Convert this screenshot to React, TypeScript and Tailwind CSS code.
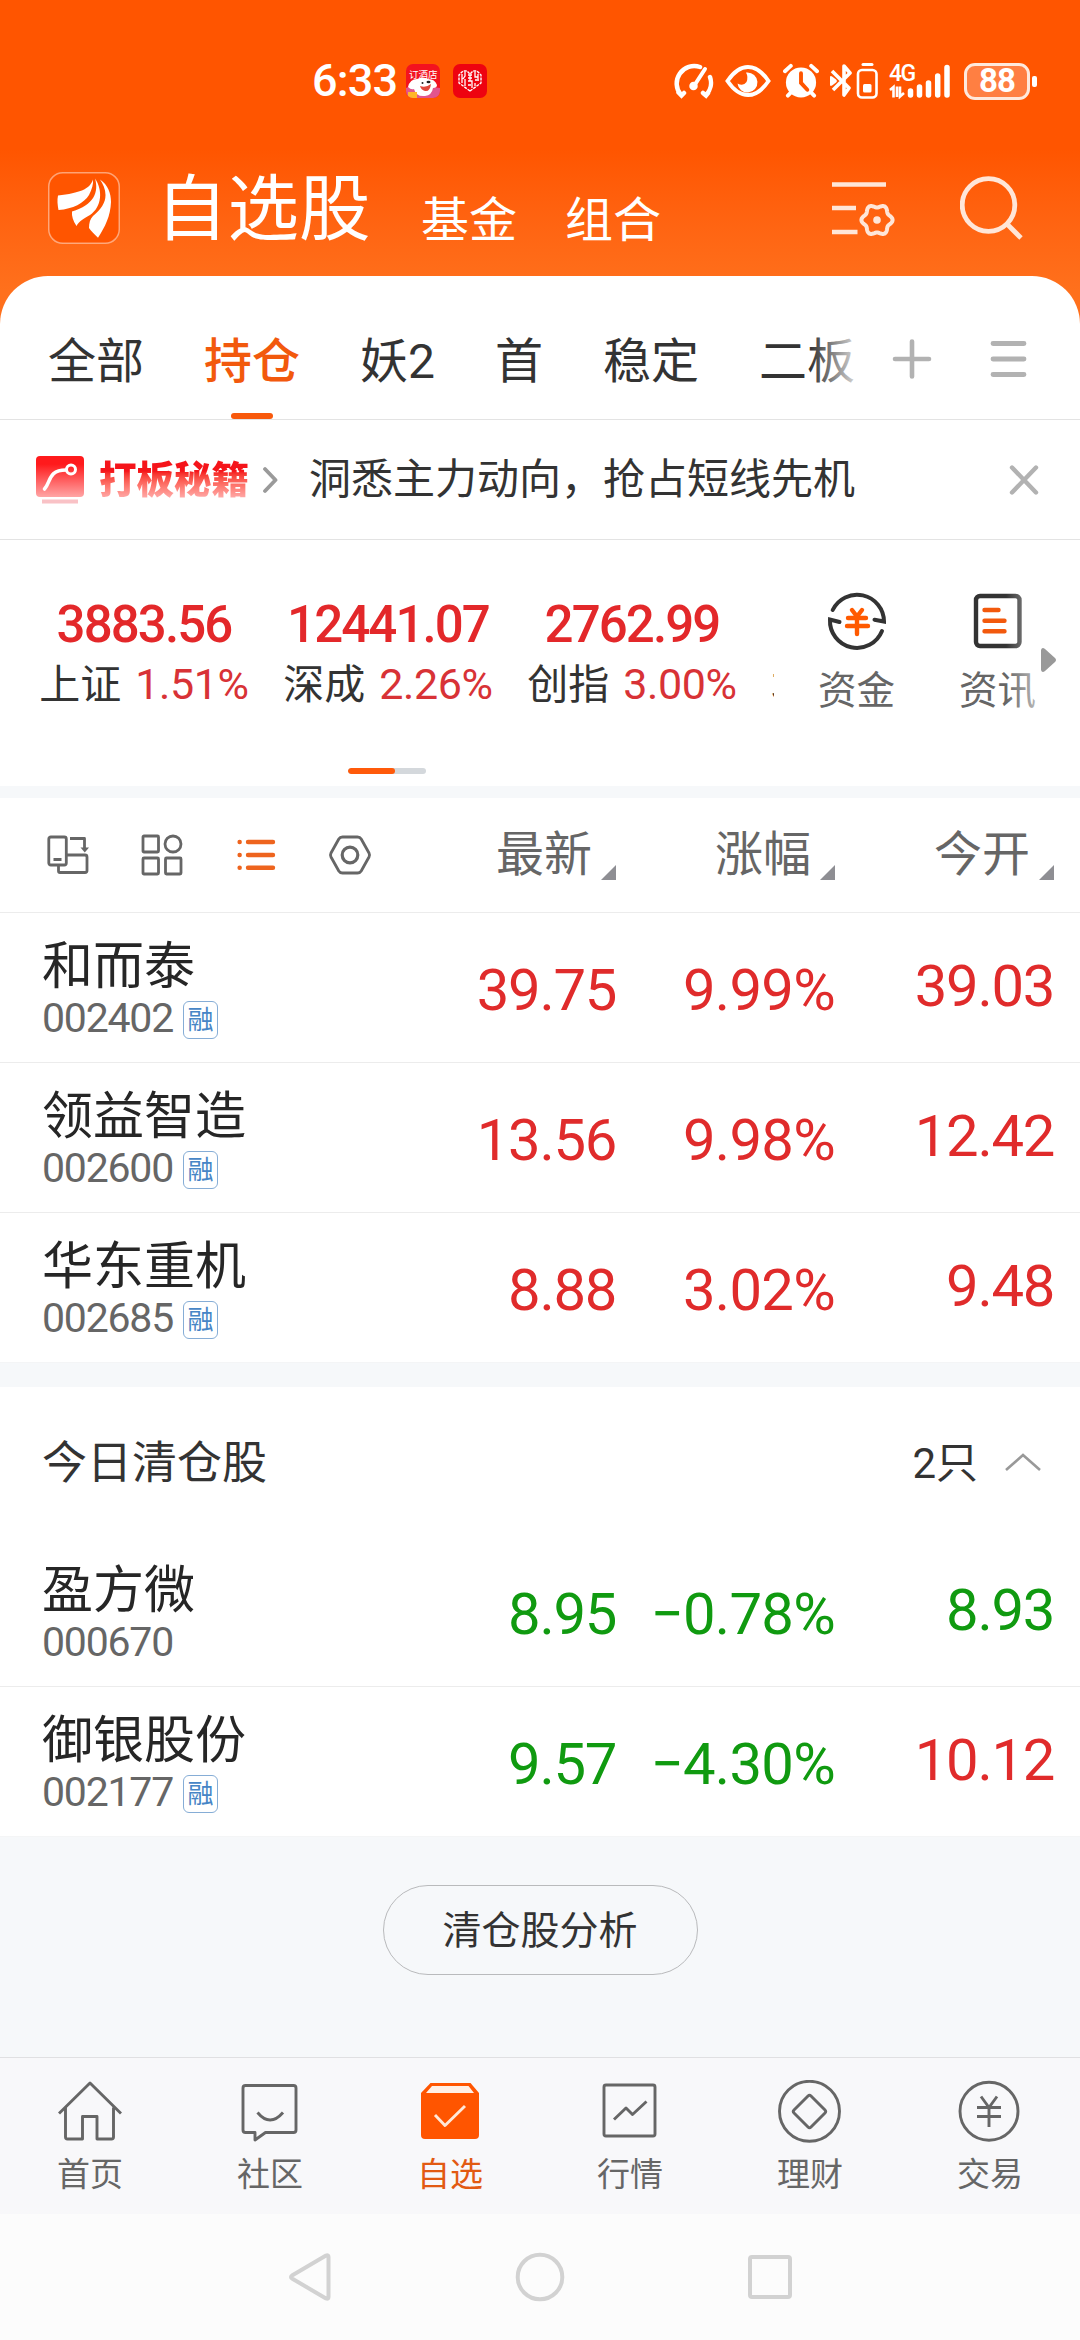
import { useState } from 'react'
import type { ReactNode } from 'react'
import clsx from 'clsx'

interface Stock {
  name: string
  code: string
  margin: boolean
  last: string
  change: string
  open: string
  down?: boolean
  openDown?: boolean
}

const holdings: Stock[] = [
  { name: '和而泰', code: '002402', margin: true, last: '39.75', change: '9.99%', open: '39.03' },
  { name: '领益智造', code: '002600', margin: true, last: '13.56', change: '9.98%', open: '12.42' },
  { name: '华东重机', code: '002685', margin: true, last: '8.88', change: '3.02%', open: '9.48' },
]

const cleared: Stock[] = [
  { name: '盈方微', code: '000670', margin: false, last: '8.95', change: '-0.78%', open: '8.93', down: true, openDown: true },
  { name: '御银股份', code: '002177', margin: true, last: '9.57', change: '-4.30%', open: '10.12', down: true },
]

const groups = ['全部', '持仓', '妖2', '首', '稳定', '二板']

const indices = [
  { name: '上证', value: '3883.56', change: '1.51%' },
  { name: '深成', value: '12441.07', change: '2.26%' },
  { name: '创指', value: '2762.99', change: '3.00%' },
]

// six-lobed gear outline around (cx, cy)
function gearPath(cx: number, cy: number, r: number, wave: number) {
  const points: string[] = []
  for (let i = 0; i < 72; i++) {
    const a = (i / 72) * Math.PI * 2
    const d = r + wave * Math.cos(6 * a)
    points.push(`${(cx + d * Math.cos(a)).toFixed(2)} ${(cy + d * Math.sin(a)).toFixed(2)}`)
  }
  return `M${points.join('L')}Z`
}

function StatusBar() {
  return (
    <div className="flex h-[124px] items-center pt-[38px] pr-[43px] pl-[312px] text-white">
      <span className="w-[94px] text-[45px] leading-[62px] font-medium tracking-[-0.8px]">6:33</span>
      {/* Notification icons */}
      <div className="relative h-[34px] w-[34px] overflow-hidden rounded-[7px] bg-[#f3131f]">
        <svg width="34" height="34" viewBox="0 0 34 34">
          <path d="M0 24q6-3 17-2t17 2v10H0z" fill="#e2558c" />
          <path d="M2 23q2-8 9-8 6-3 11 0 7 0 9 6 0 3-4 3-1 7-8 8-9 1-11-7-3 1-6-2z" fill="#fff" />
          <path d="M14 22q6 2 11-2-1 8-6 7-4-1-5-5z" fill="#e0483c" />
          <circle cx="16.500" cy="19" r="1" fill="#222" />
          <ellipse cx="22.500" cy="18" rx="2" ry="1.300" fill="#222" />
          <path d="M2 28h9v6H2z" fill="#ffb628" />
        </svg>
        <span className="absolute top-[5px] left-[3px] text-[9.500px] leading-[12px] whitespace-nowrap">订酒店</span>
      </div>
      <svg className="ml-[13px]" width="34" height="34" viewBox="0 0 34 34">
        <rect width="34" height="34" rx="7" fill="#ee0310" />
        <path d="M17 27L6 19V11l4-4h4l3 3 3-3h4l4 4v8z" fill="none" stroke="#fff" strokeWidth="1.400" strokeDasharray="3 1" />
        <path d="M9 10v9M12 8v4l-2 3M12 15v7M15 11h4M17 11v6M15 17h4v7M15 21h3M22 8v5h3M22 16h4M22 19v3M25 10v5M15 14h4" stroke="#fff" strokeWidth="1.300" fill="none" />
      </svg>
      <div className="flex-1" />
      {/* System icons */}
      <svg width="40" height="36" viewBox="0 0 40 36" fill="none" stroke="#fff" strokeWidth="4.500" strokeLinecap="round">
        <path d="M7 32A17.500 17.500 0 0 1 26 4M36 14A17.500 17.500 0 0 1 32 32M4.500 29.500L7.500 32.500L10 30M29 30L32 32.500L34 30" />
        <path d="M20 23L31 6" strokeWidth="4" />
        <circle cx="19.500" cy="23" r="2" />
      </svg>
      <svg className="ml-[11px]" width="46" height="34" viewBox="0 0 46 34">
        <path d="M2.500 17Q12 3 23 3t20.500 14Q34 31 23 31T2.500 17z" fill="none" stroke="#fff" strokeWidth="4" />
        <path d="M22 8.500a10 10 0 1 1-9.500 11q6 3 9-1.500 2-5-.5-9.500z" fill="#fff" />
      </svg>
      <svg className="ml-[12px]" width="36" height="36" viewBox="0 0 37 36">
        <circle cx="18.500" cy="19.500" r="15.500" fill="#fff" />
        <path d="M2 8L8 2.500M35 8L29 2.500M5 33l5-5M32 33l-5-5" stroke="#fff" strokeWidth="4" strokeLinecap="round" />
        <path d="M18.500 10v10l6.500 7" stroke="#ff5500" strokeWidth="4" fill="none" strokeLinecap="round" />
      </svg>
      <svg className="ml-[11px]" width="48" height="38" viewBox="0 0 48 38" fill="none" stroke="#fff">
        <path d="M2 9L19 26 14 33V4L20 11 3 28M1 16v6l4-3z" strokeWidth="3.600" strokeLinejoin="round" />
        <rect x="28" y="8" width="18.500" height="27.500" rx="4" strokeWidth="2.600" />
        <path d="M33 2.500h9" strokeWidth="3" strokeLinecap="round" />
        <rect x="33" y="22" width="8.500" height="8.500" rx="1.500" fill="#fff" stroke="none" />
      </svg>
      <div className="relative ml-[11px] h-[36px] w-[62px]">
        <span className="absolute top-[1px] left-0 text-[23px] leading-[20px] font-medium tracking-[-1.500px]">4G</span>
        <svg width="62" height="36" viewBox="0 0 62 36" stroke="#fff" fill="none">
          <path d="M1 27l3.500-3v10.500M8 23.500V34M11 23.500v10l4-3.500" strokeWidth="2.600" />
          <path d="M21.500 28v4M30.500 24v8M39.500 20v12M48.700 13v19M58 4.500v27.500" strokeWidth="5.500" strokeLinecap="round" />
        </svg>
      </div>
      <div className="ml-[13px] flex items-center">
        <div className="flex h-[37px] w-[66px] items-center justify-center rounded-[11px] border-[3px] border-[#ffe9dc] bg-[#ff7f42] text-[33px] leading-[30px] font-bold tracking-[-1px]">
          88
        </div>
        <div className="ml-[2px] h-[11px] w-[5px] rounded-[2px] bg-white" />
      </div>
    </div>
  )
}

function Header() {
  return (
    <header className="flex h-[152px] items-start pr-[54px] pl-[48px] text-white">
      <svg className="mt-[48px]" width="72" height="72" viewBox="0 0 72 72">
        <rect x=".75" y=".75" width="70.500" height="70.500" rx="14" fill="#ff5500" stroke="#fff" strokeOpacity=".45" strokeWidth="1.500" />
        <g fill="#fff">
          <path d="M45 7.500C42 17 32 21 10 23.500C9 28 9.500 33 10.500 38C25 37 36 31 41 23C44 17 45.500 12 45 7.500Z" />
          <path d="M47 6.500C51 20 46 33 24 39.500C23.500 44 25 49 28.500 54C31 49 36 46.500 42 43C54 35 55 18 47 6.500Z" />
          <path d="M52 7.500C60 13 63 21 63 30C62.500 44 57 55 50 65.700C46 62 43 59 41 56C41 51 42 47 45 44C53 37 57.500 31 57.500 23C57.500 17 55 12 52 7.500Z" />
        </g>
      </svg>
      <div className="mt-[38px] ml-[36px] flex items-start whitespace-nowrap">
        <h1 className="w-[214px] text-[71.500px] leading-[96px]">自选股</h1>
        <span className="mt-[29px] ml-[51px] text-[48px] leading-[60px]">基金</span>
        <span className="mt-[29px] ml-[48px] text-[48px] leading-[60px]">组合</span>
      </div>
      <div className="flex-1" />
      <svg className="mt-[54px]" width="64" height="62" viewBox="0 0 64 62" fill="none" stroke="#ffe6d8" strokeWidth="4.600">
        <path d="M0 6.500h54M0 30h24M0 54h25.500" />
        <path d={gearPath(45, 42, 14, 1.6)} strokeWidth="4" strokeLinejoin="round" />
        <circle cx="45" cy="42" r="3.800" fill="#ffe6d8" stroke="none" />
      </svg>
      <svg className="mt-[50px] ml-[64px]" width="66" height="66" viewBox="0 0 66 66" fill="none" stroke="#ffe6d8" strokeWidth="4.800">
        <circle cx="28.500" cy="31" r="26.300" />
        <path d="M46.500 49.500L61 64" />
      </svg>
    </header>
  )
}

function GroupTabs() {
  const [active, setActive] = useState('持仓')

  return (
    <nav className="flex h-[144px] items-stretch border-b border-[#e3e3e3]">
      <div className="relative flex w-[856px] gap-[60px] overflow-hidden pl-[48px]">
        {groups.map((group) => (
          <button
            key={group}
            onClick={() => setActive(group)}
            className={clsx(
              'relative shrink-0 pt-[28px] text-[48px] leading-none whitespace-nowrap',
              group === active ? 'font-medium text-[#f2590d]' : 'text-[#333]'
            )}
          >
            {group}
            {group === active && (
              <span className="absolute bottom-0 left-1/2 h-[6px] w-[42px] -translate-x-1/2 rounded-full bg-[#f8590c]" />
            )}
          </button>
        ))}
        <div className="absolute top-0 right-0 h-full w-[46px] bg-linear-to-r from-transparent to-white/80" />
      </div>
      <svg className="mt-[63px] ml-[36px]" width="40" height="40" viewBox="0 0 40 40" stroke="#b2b2b2" strokeWidth="4.600" strokeLinecap="round">
        <path d="M20 2.500v35M3 20h34" />
      </svg>
      <svg className="mt-[63px] ml-[56px]" width="40" height="40" viewBox="0 0 40 40" stroke="#b2b2b2" strokeWidth="4.800" strokeLinecap="round">
        <path d="M5 4.500h31M5 20h31M5 35.500h31" />
      </svg>
    </nav>
  )
}

function PromoBar() {
  return (
    <div className="flex h-[120px] items-center border-b border-[#e3e3e3] pr-[41px] pl-[36px]">
      <svg width="48" height="50" viewBox="0 0 48 50">
        <defs>
          <linearGradient id="promo" x1="0" y1="0" x2="0" y2="1">
            <stop offset=".2" stopColor="#ff1a1c" />
            <stop offset="1" stopColor="#ffa5a5" />
          </linearGradient>
        </defs>
        <rect width="48" height="41" rx="4" y="1" fill="url(#promo)" />
        <path d="M6 46.500h36" stroke="#f9c2c6" strokeWidth="4" />
        <path d="M8.500 34C15 27 12 15 30 15" fill="none" stroke="#fff" strokeWidth="3.600" strokeLinecap="round" />
        <circle cx="35" cy="14.500" r="4.500" fill="none" stroke="#fff" strokeWidth="3" />
      </svg>
      <span className="ml-[15px] w-[150px] bg-linear-to-b from-[#f5141a] from-30% to-[#ffb0b0] to-95% bg-clip-text text-[37.500px] leading-[44px] font-black text-transparent">
        打板秘籍
      </span>
      <svg className="ml-[13px]" width="16" height="28" viewBox="0 0 16 28" fill="none" stroke="#9a9a9a" strokeWidth="3.800" strokeLinecap="round" strokeLinejoin="round">
        <path d="M3 3l10.500 11L3 25" />
      </svg>
      <span className="ml-[31px] flex-1 text-[42px] leading-[60px] text-[#333]">洞悉主力动向，抢占短线先机</span>
      <svg className="mt-[1px]" width="30" height="30" viewBox="0 0 30 30" stroke="#b2b2b2" strokeWidth="4.400" strokeLinecap="round">
        <path d="M3 2.500l24 25M27 2.500l-24 25" />
      </svg>
    </div>
  )
}

function Indices() {
  return (
    <section className="relative flex h-[246px]">
      <div className="flex w-[774px] overflow-hidden pl-[22px]">
        {indices.map((item) => (
          <div key={item.name} className="flex w-[244px] shrink-0 flex-col items-center whitespace-nowrap">
            <div className="mt-[55px] text-[51px] leading-[60px] font-medium tracking-[-1.900px] text-[#e3282a]">{item.value}</div>
            <div className="text-[41px] leading-[58px] text-[#333]">
              {item.name}
              <span className="ml-[14px] text-[43px] tracking-[-0.400px] text-[#d83236]">{item.change}</span>
            </div>
          </div>
        ))}
        {/* next index, scrolled out of view */}
        <div className="shrink-0 pt-[115px] pl-[17px] text-[41px] leading-[58px] text-[#333]">北</div>
      </div>
      <div className="relative flex flex-1">
        <div className="ml-[12px] flex w-[141px] flex-col items-center pt-[50px]">
          <svg width="62" height="62" viewBox="0 0 62 62" fill="none" stroke="#333" strokeWidth="4" strokeLinecap="round">
            <path d="M6.700 20A27 27 0 0 1 58 31.500L48.500 29.700M56 41A27 27 0 0 1 4 29.500L13.500 32" />
            <path d="M26 20l5 6.500 5-6.500M22 28h18M21 36h21M31 28v16" stroke="#ff5a00" strokeWidth="4.400" />
          </svg>
          <span className="mt-[15px] text-[38.500px] leading-[48px] text-[#666]">资金</span>
        </div>
        <div className="flex w-[141px] flex-col items-center pt-[50px]">
          <svg width="62" height="62" viewBox="0 0 62 62" fill="none" strokeLinecap="round">
            <rect x="9" y="6" width="43.500" height="50" rx="4" stroke="#333" strokeWidth="4.400" />
            <path d="M17.500 20h14M17.500 30.700h20M17.500 41.300h20" stroke="#f2590d" strokeWidth="4.400" />
          </svg>
          <span className="mt-[15px] text-[38.500px] leading-[48px] text-[#666]">资讯</span>
        </div>
        <div className="absolute top-[50px] right-[40px] h-[130px] w-[34px] bg-linear-to-r from-transparent to-white/60" />
        <svg className="absolute top-[107px] right-[23px]" width="17" height="26" viewBox="0 0 17 26" fill="#999">
          <path d="M1 3Q2-.5 5 2L15 11q2 2 0 4L5 24q-3 2.500-4-1z" />
        </svg>
      </div>
      {/* Pager */}
      <div className="absolute top-[228px] left-[348px] h-[6px] w-[78px] overflow-hidden rounded-full bg-[#d4d8dc]">
        <div className="h-full w-[47px] rounded-full bg-[#ff5a0a]" />
      </div>
    </section>
  )
}

function TableHead() {
  return (
    <div className="flex h-[115px] items-center border-b border-[#ececec] pl-[46px]">
      <div className="flex w-[351px] items-center gap-[50px] text-[#666]">
        <svg width="44" height="44" viewBox="0 0 44 44" fill="none" stroke="currentColor" strokeWidth="2.800" strokeLinejoin="round">
          <rect x="2.800" y="4" width="17.500" height="28" rx="2" />
          <path d="M7.500 26.500h8M12.500 33v5q0 1.500 1.500 1.500h25q2 0 2-2V24q0-2-2-2H21M24 5.500h14.500V15" />
          <path d="M34.500 14.500h8.500l-4.200 5z" fill="currentColor" stroke="none" />
        </svg>
        <svg width="44" height="44" viewBox="0 0 44 44" fill="none" stroke="currentColor" strokeWidth="2.800">
          <rect x="3" y="3" width="15.500" height="16" rx="1" />
          <circle cx="33" cy="11" r="8" />
          <rect x="3" y="25" width="15.500" height="16" rx="1" />
          <rect x="25.500" y="25" width="15.500" height="16" rx="1" />
        </svg>
        <svg width="44" height="44" viewBox="0 0 44 44" fill="none" stroke="#ee641e" strokeWidth="4.400" strokeLinecap="round">
          <path d="M5.600 9h.1M14 9h25M5.600 22h.1M14 22h25M5.600 34.700h.1M14 34.700h25" />
        </svg>
        <svg width="44" height="44" viewBox="0 0 44 44" fill="none" stroke="currentColor" strokeWidth="2.800">
          <path d="M14.500 4h15q2.500 0 3.700 2L41 20q1 2 0 4l-7.800 14q-1.200 2-3.700 2h-15q-2.500 0-3.700-2L3 24q-1-2 0-4l7.800-14q1.200-2 3.700-2z" />
          <circle cx="22" cy="22" r="7.800" strokeWidth="3.200" />
        </svg>
      </div>
      {['最新', '涨幅', '今开'].map((label) => (
        <div key={label} className="flex w-[219px] items-end justify-end">
          <span className="text-[48px] leading-[60px] text-[#666]">{label}</span>
          <svg className="mb-[5px] ml-[9px]" width="15" height="15" viewBox="0 0 15 15" fill="#8e8e93">
            <path d="M15 0v15H0z" />
          </svg>
        </div>
      ))}
    </div>
  )
}

function StockRow({ stock, last }: { stock: Stock; last?: boolean }) {
  return (
    <div className={clsx('flex h-[150px] items-center border-b pl-[42px]', last ? 'border-[#f4f5f6]' : 'border-[#ececec]')}>
      <div className="w-[355px]">
        <div className="pt-[1px] text-[51px] leading-[59px] text-[#262626]">{stock.name}</div>
        <div className="flex items-center">
          <span className="text-[41px] leading-[44px] tracking-[-1.200px] text-[#666]">{stock.code}</span>
          {stock.margin && (
            <span className="mt-[2px] ml-[10px] -mb-[2px] flex h-[38px] w-[35px] items-center justify-center rounded-[6px] border-[1.500px] border-[#86add6] text-[26px] leading-none text-[#4685c6]">
              融
            </span>
          )}
        </div>
      </div>
      <div className={clsx('flex text-right text-[58px] leading-[70px] tracking-[-1.300px]', stock.down ? 'text-[#109a10]' : 'text-[#e02b2b]')}>
        <span className="w-[219px] pt-[4px]">{stock.last}</span>
        <span className="w-[219px] pt-[4px] tracking-[-0.700px]">{stock.change.replace('-', '−')}</span>
        <span className={clsx('w-[219px]', stock.openDown ? 'text-[#109a10]' : 'text-[#e02b2b]')}>{stock.open}</span>
      </div>
    </div>
  )
}

function NavItem({ label, active, children }: { label: string; active?: boolean; children: ReactNode }) {
  return (
    <button className={clsx('flex w-[180px] flex-col items-center pt-[22px]', active ? 'text-[#e25a12]' : 'text-[#666]')}>
      <svg width="64" height="64" viewBox="0 0 64 64" fill="none" stroke="currentColor" strokeWidth="2.900" strokeLinejoin="round">
        {children}
      </svg>
      <span className="mt-[9px] text-[33px] leading-[44px]">{label}</span>
    </button>
  )
}

function BottomNav() {
  return (
    <nav className="flex h-[157px] border-t border-[#e0e0e2] bg-[#f8f8fa]">
      <NavItem label="首页">
        <path d="M1 33.500L32 3l31 30.500M7.500 27.500V57q0 2 2 2h15V36.500H39V59h14.500q2 0 2-2V27.500" />
      </NavItem>
      <NavItem label="社区">
        <path d="M7.500 5.500h48q2.500 0 2.500 2.500v42q0 2.500-2.500 2.500H27.500L17 60v-7.500H7.500Q5 52.500 5 50V8q0-2.500 2.500-2.500z" />
        <path d="M19.500 32.500q12.500 15 25.500 0" />
      </NavItem>
      <NavItem label="自选" active>
        <path d="M3 13L12.500 3h40L61 13v42q0 4-4 4H7q-4 0-4-4z" fill="#ff5500" stroke="none" />
        <path d="M8 13l6-7h36.500l5.500 7z" fill="#fff0e6" stroke="none" />
        <path d="M17 35l10 10.500L47 26" stroke="#ffe8d8" />
      </NavItem>
      <NavItem label="行情">
        <rect x="6" y="5" width="51" height="51" rx="2" />
        <path d="M16 39.500l12-11.500 6.500 6.500L48.500 21.500" />
      </NavItem>
      <NavItem label="理财">
        <circle cx="31.500" cy="31.300" r="30" />
        <path d="M30 16q1.500-1.500 3 0l14 14q1.500 1.500 0 3l-14 14q-1.500 1.500-3 0l-14-14q-1.500-1.500 0-3z" />
      </NavItem>
      <NavItem label="交易">
        <circle cx="31" cy="31.300" r="29" />
        <path d="M23 16.500l8 11 8-11M19 27.500h24M19 36.500h24M31 27.500V47" />
      </NavItem>
    </nav>
  )
}

function SystemNav() {
  return (
    <div className="flex h-[126px] items-center justify-center gap-[180px] bg-[#fcfcfc]">
      <svg width="50" height="50" viewBox="0 0 50 50" fill="none" stroke="#d2d2d2" strokeWidth="4" strokeLinejoin="round">
        <path d="M7 23.500L41 3.500q2.500-1 2.500 1.500v40q0 2.500-2.500 1.500L7 26.500q-2-1.500 0-3z" />
      </svg>
      <svg width="50" height="50" viewBox="0 0 50 50" fill="none" stroke="#d2d2d2" strokeWidth="4">
        <circle cx="25" cy="25" r="22.300" />
      </svg>
      <svg width="50" height="50" viewBox="0 0 50 50" fill="none" stroke="#d2d2d2" strokeWidth="4">
        <rect x="5" y="5" width="40" height="40" rx="2" />
      </svg>
    </div>
  )
}

export default function App() {
  return (
    <div className="flex h-[2340px] w-[1080px] flex-col overflow-hidden bg-[#f6f8fa] font-[Roboto,'Noto_Sans_CJK_SC',sans-serif]">
      <div className="h-[330px] shrink-0 bg-linear-to-b from-[#ff5500] from-45% to-[#ff701c] to-88%">
        <StatusBar />
        <Header />
      </div>

      <div className="relative -mt-[54px] shrink-0 rounded-t-[48px] bg-white">
        <GroupTabs />
        <PromoBar />
        <Indices />
      </div>

      {/* Holdings */}
      <div className="mt-[12px] bg-white">
        <TableHead />
        {holdings.map((stock, i) => (
          <StockRow key={stock.code} stock={stock} last={i === holdings.length - 1} />
        ))}
      </div>

      {/* Cleared today */}
      <div className="mt-[24px] bg-white">
        <div className="flex h-[150px] items-center pr-[39px] pl-[42px] text-[#333]">
          <span className="flex-1 pt-[3px] text-[45px] leading-[60px]">今日清仓股</span>
          <span className="pt-[3px] text-[42px] leading-[60px]">2只</span>
          <svg className="ml-[27px]" width="36" height="20" viewBox="0 0 36 20" fill="none" stroke="#999" strokeWidth="2.600">
            <path d="M1 18L18 3l17 15" />
          </svg>
        </div>
        {cleared.map((stock, i) => (
          <StockRow key={stock.code} stock={stock} last={i === cleared.length - 1} />
        ))}
      </div>

      <div className="flex flex-1 items-start justify-center pt-[48px]">
        <button className="h-[90px] w-[315px] rounded-full border border-[#b9babc] pt-[3px] text-[39px] leading-none text-[#333]">
          清仓股分析
        </button>
      </div>

      <BottomNav />
      <SystemNav />
    </div>
  )
}
